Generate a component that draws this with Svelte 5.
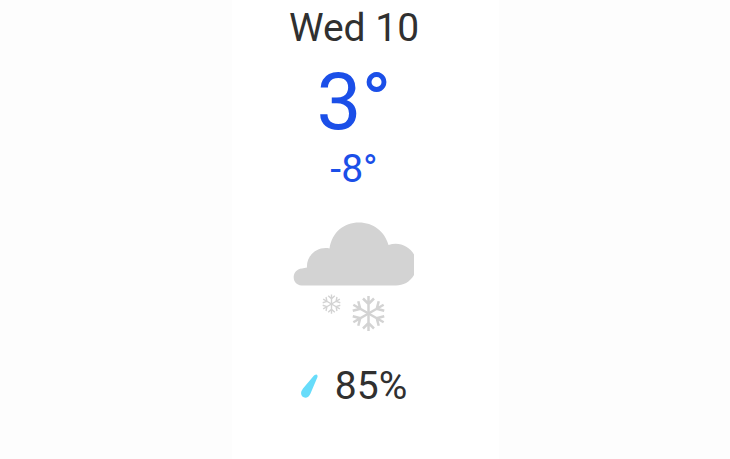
<script>
	export let day = "Wed 10";
	export let high = 3;
	export let low = -8;
	export let precipitation = 85;

	const arms = [0, 60, 120, 180, 240, 300];
</script>

<main>
	<section class="day">
		<h2>{day}</h2>
		<p class="high">{high}°</p>
		<p class="low">{low}°</p>

		<svg class="weather" viewBox="0 0 122 110" role="img" aria-label="Snow showers">
			<path
				fill="#d3d3d3"
				d="M8.500 63.500C-2 63 -2 47.500 9 46.500L14 45.500C13 34 24 24 36.500 26.500C39 10 51 .5 66 .5C80 .5 92 9.500 95.500 23C106 19.500 116 24 121 32.500V53C117 60 110 63.500 103 63.500Z"
			/>
			<g class="flake" transform="translate(38.500 82) scale(0.55)">
				{#each arms as angle}
					<path transform="rotate({angle})" d="M0 0V-17.500M-6 -15L0 -9.500L6 -15" />
				{/each}
			</g>
			<g class="flake" transform="translate(75.500 91.500)">
				{#each arms as angle}
					<path transform="rotate({angle})" d="M0 0V-17.500M-5.500 -15L0 -9.500L5.500 -15" />
				{/each}
			</g>
		</svg>

		<div class="rain">
			<svg class="drop" viewBox="0 0 18 26" aria-hidden="true">
				<path
					fill="#67dcfa"
					d="M13 2.500Q17 0 16.500 4L9.500 20.500C7 27.500 -2 25 .5 18Q1 17 2 15.500Z"
				/>
			</svg>
			<span>{precipitation}%</span>
		</div>
	</section>
</main>

<style>
	:global(body) {
		background-color: #fdfdfd;
	}

	main {
		display: flex;
		justify-content: center;
		min-height: 100vh;
		font-family: Roboto, sans-serif;
		color: #303030;
	}

	.day {
		display: flex;
		flex-direction: column;
		align-items: center;
		box-sizing: border-box;
		width: 267px;
		padding: 4px 22px 0 0;
		background-color: #fff;
	}

	h2,
	p {
		margin: 0;
		font-weight: 400;
	}

	h2,
	.low,
	.rain {
		font-size: 39px;
		line-height: 48px;
	}

	.high,
	.low {
		color: #1b4fe8;
	}

	.high {
		font-size: 80px;
		line-height: 100px;
	}

	.low {
		line-height: 34px;
	}

	/* the icon sits below the temperatures */
	.weather {
		width: 122px;
		height: 110px;
		margin-top: 36px;
	}

	.flake {
		fill: none;
		stroke: #d3d3d3;
		stroke-width: 2.5;
	}

	.rain {
		display: flex;
		align-items: center;
		gap: 16px;
		margin-top: 30px;
	}

	.drop {
		width: 18px;
		height: 26px;
	}
</style>
